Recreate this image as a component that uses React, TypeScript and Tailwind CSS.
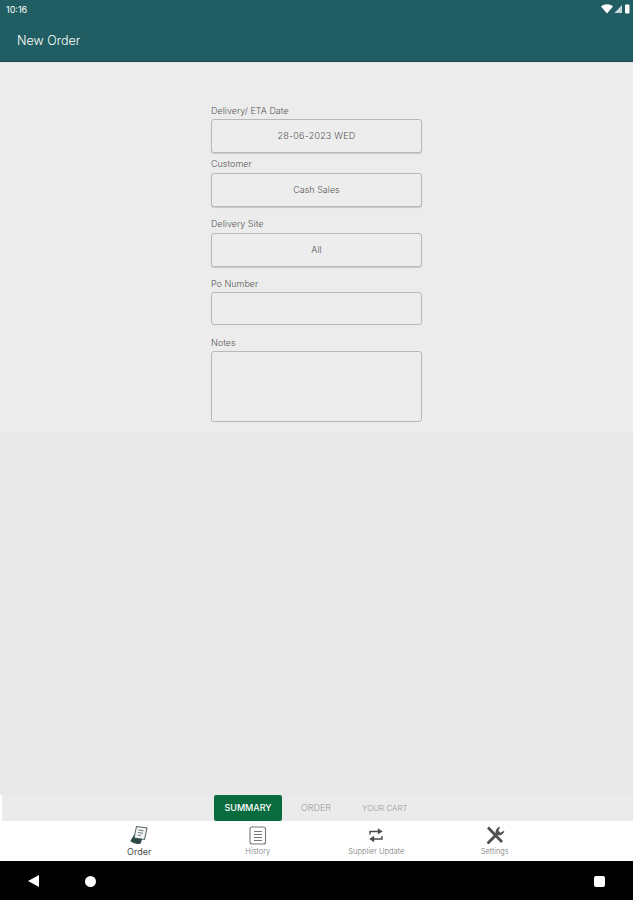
import React from 'react';

const fontStyle = "font-['Inter',sans-serif]";

const StatusIcons = () => (
  <svg width="29" height="10" viewBox="0 0 29 10" fill="white">
    <path d="M0 2.4C1.8 1 3.9.3 6 .3s4.2.7 6 2.1L6 9.5z" />
    <path d="M21 1v8h-7.6z" opacity="0.75" />
    <rect x="24" y="0.5" width="4.5" height="9" rx="1" />
  </svg>
);

const OrderIcon = () => (
  <svg width="20" height="20" viewBox="0 0 20 20" fill="none" stroke="#5f6b6b" strokeWidth="1.1">
    <path d="M7.5 1.5 18 3l-2.5 11.5L5 13z" fill="#f4f6f6" />
    <path d="M9.5 5l5 .8M9 7.5l5 .8M8.5 10l3.5.5" strokeWidth="0.9" />
    <path d="M5 11 2 16c2.5 2 6 2.6 9 2.2l1.5-3.7L5 13.5z" fill="#2c4a48" stroke="#2c4a48" />
  </svg>
);

const HistoryIcon = () => (
  <svg width="18" height="19" viewBox="0 0 18 19" fill="none" stroke="#777777" strokeWidth="1.1">
    <rect x="1" y="1" width="15.5" height="17" rx="2" />
    <path d="M5 5.5h8M5 8.5h8M5 11.5h8M5 14.5h8" />
  </svg>
);

const SwapIcon = () => (
  <svg width="16" height="18" viewBox="0 0 16 18" fill="#4a4a4a" stroke="#4a4a4a">
    <path d="M2 8.5V5.5h10" fill="none" strokeWidth="1.4" />
    <path d="M10 2.5 14.5 5.5 10 8z" strokeWidth="0.3" />
    <path d="M14 10v3H4" fill="none" strokeWidth="1.4" />
    <path d="M6 10 1.5 13 6 16z" strokeWidth="0.3" />
  </svg>
);

const ToolsIcon = () => (
  <svg width="20" height="19" viewBox="0 0 20 19" fill="none" stroke="#505050">
    <path d="M3 1.5 17 16" strokeWidth="2.8" />
    <path d="M3.5 16.5 12 8" strokeWidth="3" strokeLinecap="round" />
    <path d="M11 7.5c-.6-2.8 1-5.5 3.5-6.2L13 5l2.5 2 3.4-1.8c-.6 2.7-3.2 4.3-5.6 3.5z" fill="#505050" strokeWidth="0.8" />
  </svg>
);

const formFields = [
  { label: 'Delivery/ ETA Date', value: '28-06-2023 WED', boxClass: 'h-[34px] tracking-[0.2px] shadow-[0_1px_1px_rgba(0,0,0,0.15)]', labelClass: 'mb-[3px]' },
  { label: 'Customer', value: 'Cash Sales', boxClass: 'h-[34px] shadow-[0_1px_1px_rgba(0,0,0,0.15)]', labelClass: 'mt-[5px] mb-[4px]' },
  { label: 'Delivery Site', value: 'All', boxClass: 'h-[34px] shadow-[0_1px_1px_rgba(0,0,0,0.15)]', labelClass: 'mt-[11px] mb-[4px]' },
  { label: 'Po Number', value: '', boxClass: 'h-[33px]', labelClass: 'mt-[11px] mb-[3px]' },
  { label: 'Notes', value: '', boxClass: 'h-[71px]', labelClass: 'mt-[12px] mb-[3px]' },
];

const navItems = [
  { label: 'Order', icon: OrderIcon, text: 'text-[9px] text-[#4b4b4b]' },
  { label: 'History', icon: HistoryIcon, text: 'text-[7.5px] text-[#777777] font-light' },
  { label: 'Supplier Update', icon: SwapIcon, text: 'text-[7.5px] text-[#777777] font-light' },
  { label: 'Settings', icon: ToolsIcon, text: 'text-[7.5px] text-[#777777] font-light' },
];

export default function App() {
  return (
    <div className={`${fontStyle} flex h-[900px] w-[633px] flex-col overflow-hidden bg-[#e9e9e9]`}>
      <header className="h-[62px] shrink-0 border-b border-[#164a4c] bg-[#215e63] text-white">
        <div className="flex h-[18px] items-center justify-between pl-[6px] pr-[3px]">
          <span className="text-[9px] leading-none">10:16</span>
          <StatusIcons />
        </div>
        <h1 className="ml-[17px] mt-[13px] text-[12.5px] font-light leading-[20px]">New Order</h1>
      </header>

      <main className="flex-1 bg-[#e9e9e9]">
        <div className="h-[370px] bg-[#ececec] pt-[43px]">
          <div className="ml-[211px] w-[211px]">
            {formFields.map((field) => (
              <div key={field.label}>
                <div className={`text-[9px] font-light leading-[11px] text-[#555555] ${field.labelClass}`}>{field.label}</div>
                <div className={`flex items-center justify-center rounded-[3px] border border-[#b8b8b8] bg-[#ededed] text-[9px] font-light text-[#555555] ${field.boxClass}`}>
                  {field.value}
                </div>
              </div>
            ))}
          </div>
        </div>
      </main>

      <div className="flex h-[26px] shrink-0 items-center bg-[#ebebeb]">
        <div className="h-full w-[2px] bg-white" />
        <button className="ml-[212px] h-[26px] w-[68px] rounded-[2px] bg-[#0a6b3f] text-[9px] font-medium text-white">SUMMARY</button>
        <span className="ml-[19px] text-[9px] font-light text-[#9a9a9a]">ORDER</span>
        <span className="ml-[31px] text-[8px] font-light text-[#9a9a9a]">YOUR CART</span>
      </div>

      <nav className="flex h-[40px] shrink-0 bg-white pl-[80px]">
        {navItems.map((item) => (
          <div key={item.label} className="flex w-[118.5px] flex-col items-center pt-[4px]">
            <div className="flex h-[20px] items-center justify-center">
              <item.icon />
            </div>
            <span className={`mt-[1px] whitespace-nowrap leading-[12px] ${item.text}`}>{item.label}</span>
          </div>
        ))}
      </nav>

      <div className="flex h-[39px] shrink-0 items-center bg-black pl-[28px] pr-[28px] pt-[1px]">
        <svg width="11" height="12" viewBox="0 0 11 12" fill="white"><path d="M11 0v12L0 6z" /></svg>
        <span className="ml-[46px] h-[11px] w-[11px] rounded-full bg-white" />
        <span className="ml-auto h-[11px] w-[11px] rounded-[2px] bg-white" />
      </div>
    </div>
  );
}
